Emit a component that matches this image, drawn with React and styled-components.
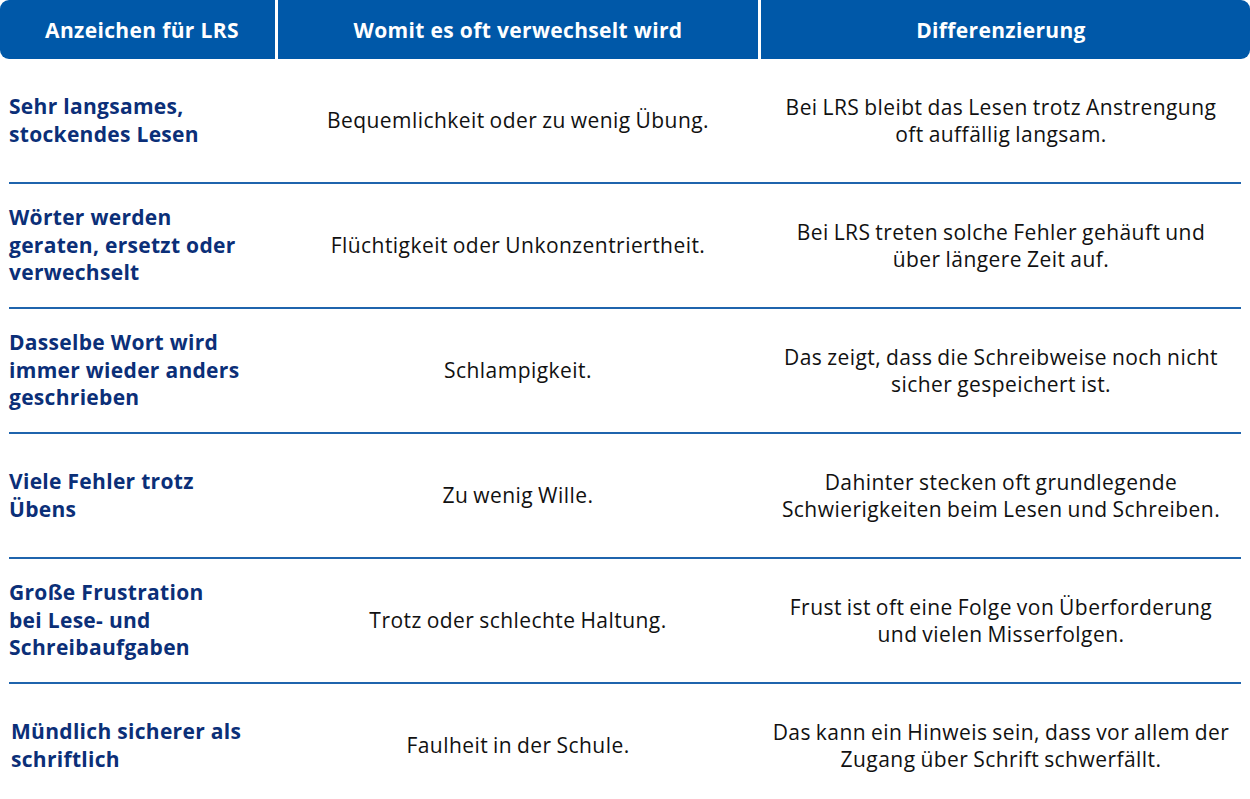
import React from "react"
import styled, { createGlobalStyle } from "styled-components"

const GlobalStyle = createGlobalStyle`
  body {
    margin: 0;
    background: #fff;
    font-family: "Open Sans", "Liberation Sans", sans-serif;
  }
`

const Page = styled.div`
  width: 1250px;
`

const Header = styled.div`
  display: grid;
  grid-template-columns: 275px 480px 1fr;
  column-gap: 3px;
  height: 59px;
`

const HeadCell = styled.div`
  display: flex;
  align-items: center;
  justify-content: center;
  padding: ${({ first, last }) => (first ? "0 0 0 9px" : last ? "0 9px 0 0" : "0")};
  background: #0058a8;
  color: #fff;
  font-weight: 700;
  font-size: 21px;
  letter-spacing: 0.35px;
  border-radius: ${({ first, last }) => (first ? "9px 0 0 9px" : last ? "0 9px 9px 0" : "0")};
`

const Row = styled.div`
  display: grid;
  grid-template-columns: 266px 480px 1fr;
  column-gap: 3px;
  margin: 0 9px;
  height: 123px;
  border-bottom: ${({ last }) => (last ? "none" : "2px solid #1f64ad")};
`

const Sign = styled.div`
  display: flex;
  align-items: center;
  padding-left: ${({ indent }) => indent || 0}px;
  color: #0b2f78;
  font-weight: 700;
  font-size: 21px;
  letter-spacing: 0.3px;
  line-height: 27.5px;
`

const Plain = styled.div`
  display: flex;
  align-items: center;
  justify-content: center;
  text-align: center;
  color: #111;
  font-size: 21px;
  letter-spacing: 0.45px;
  word-spacing: -1px;
  line-height: 27px;
`

const rows = [
  {
    sign: ["Sehr langsames,", "stockendes Lesen"],
    mixup: "Bequemlichkeit oder zu wenig Übung.",
    diff: ["Bei LRS bleibt das Lesen trotz Anstrengung", "oft auffällig langsam."],
  },
  {
    sign: ["Wörter werden", "geraten, ersetzt oder", "verwechselt"],
    mixup: "Flüchtigkeit oder Unkonzentriertheit.",
    diff: ["Bei LRS treten solche Fehler gehäuft und", "über längere Zeit auf."],
  },
  {
    sign: ["Dasselbe Wort wird", "immer wieder anders", "geschrieben"],
    mixup: "Schlampigkeit.",
    diff: ["Das zeigt, dass die Schreibweise noch nicht", "sicher gespeichert ist."],
  },
  {
    sign: ["Viele Fehler trotz", "Übens"],
    mixup: "Zu wenig Wille.",
    diff: ["Dahinter stecken oft grundlegende", "Schwierigkeiten beim Lesen und Schreiben."],
  },
  {
    sign: ["Große Frustration", "bei Lese- und", "Schreibaufgaben"],
    mixup: "Trotz oder schlechte Haltung.",
    diff: ["Frust ist oft eine Folge von Überforderung", "und vielen Misserfolgen."],
  },
  {
    sign: ["Mündlich sicherer als", "schriftlich"],
    mixup: "Faulheit in der Schule.",
    diff: ["Das kann ein Hinweis sein, dass vor allem der", "Zugang über Schrift schwerfällt."],
    indent: 2,
  },
]

const Lines = ({ lines }) =>
  lines.map((l, i) => (
    <React.Fragment key={i}>
      {i > 0 && <br />}
      {l}
    </React.Fragment>
  ))

export default function App() {
  return (
    <Page>
      <GlobalStyle />
      <Header>
        <HeadCell first>Anzeichen für LRS</HeadCell>
        <HeadCell>Womit es oft verwechselt wird</HeadCell>
        <HeadCell last>Differenzierung</HeadCell>
      </Header>
      {rows.map((r, i) => (
        <Row key={i} last={i === rows.length - 1}>
          <Sign indent={r.indent}>
            <div><Lines lines={r.sign} /></div>
          </Sign>
          <Plain>{r.mixup}</Plain>
          <Plain>
            <div><Lines lines={r.diff} /></div>
          </Plain>
        </Row>
      ))}
    </Page>
  )
}
